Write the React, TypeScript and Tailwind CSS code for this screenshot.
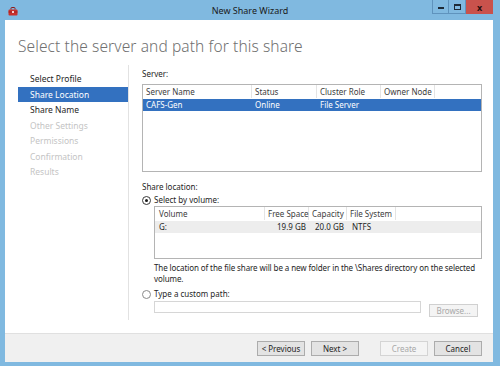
import React from 'react'

const navItems = [
  { label: 'Select Profile', state: 'done' },
  { label: 'Share Location', state: 'active' },
  { label: 'Share Name', state: 'done' },
  { label: 'Other Settings', state: 'off' },
  { label: 'Permissions', state: 'off' },
  { label: 'Confirmation', state: 'off' },
  { label: 'Results', state: 'off' },
]

function WizardIcon() {
  return (
    <svg width="10" height="9" viewBox="0 0 10 9">
      <path d="M3 2.5 V1.2 Q3 0.5 3.7 0.5 H6.3 Q7 0.5 7 1.2 V2.5" fill="none" stroke="#8c1a1a" strokeWidth="1" />
      <rect x="0.5" y="2.5" width="9" height="6" rx="1" fill="#c9302c" />
      <rect x="0.5" y="4.5" width="9" height="1" fill="#9e1f1f" />
      <rect x="4" y="4" width="2" height="2" fill="#f2d0d0" />
    </svg>
  )
}

function Radio({ checked }: { checked?: boolean }) {
  return (
    <span
      className={
        'w-[9px] h-[9px] rounded-full border flex items-center justify-center bg-white ' +
        (checked ? 'border-[#3a3a3a]' : 'border-[#8a8a8a]')
      }
    >
      {checked && <span className="w-[3px] h-[3px] rounded-full bg-[#1a1a1a]" />}
    </span>
  )
}

function Btn({ label, disabled }: { label: string; disabled?: boolean }) {
  return (
    <div
      className={
        'w-[48px] h-[15px] border flex items-center justify-center leading-none ' +
        (disabled
          ? 'border-[#d4d4d4] bg-[#f4f4f4] text-[#a8a8a8]'
          : 'border-[#acacac] bg-[#e3e3e3] text-[#1e1e1e]')
      }
    >
      {label}
    </div>
  )
}

export default function App() {
  return (
    <div className="w-[500px] h-[366px] bg-[#80b9e0] flex flex-col font-['Noto_Sans',sans-serif] text-[8px] text-[#1e1e1e] overflow-hidden">
      {/* title bar */}
      <div className="h-[20px] grid grid-cols-[1fr_auto_1fr] shrink-0">
        <div className="pl-[8px] pt-[7px]">
          <WizardIcon />
        </div>
        <div className="pt-[4px] text-[9px] leading-[14px] text-[#1a1a1a]">New Share Wizard</div>
        <div className="flex justify-end pr-[7px]">
          <div className="w-[17px] h-[14px] border border-[#5f93bd] border-t-0 flex items-end justify-center pb-[4px]">
            <span className="w-[6px] h-[2px] bg-[#1e2a36]" />
          </div>
          <div className="w-[17px] h-[14px] border border-[#5f93bd] border-t-0 border-l-0 flex items-center justify-center">
            <span className="w-[7px] h-[6px] border border-[#1e2a36] border-t-2" />
          </div>
          <div className="w-[27px] h-[14px] bg-[#c9524c] flex items-center justify-center text-[9px] font-bold leading-none text-[#2a0f0f]">
            x
          </div>
        </div>
      </div>

      {/* client */}
      <div className="flex-1 ml-[5px] mr-[7px] mb-[4px] bg-white flex flex-col">
        <div className="h-[45px] shrink-0 pl-[13px] pt-[14px] text-[15.5px] leading-[24px] text-[#707070] font-light tracking-[0.1px]">
          Select the server and path for this share
        </div>

        <div className="flex-1 flex">
          {/* nav */}
          <div className="w-[124px] h-[255px] border-r border-[#e2e2e2] pt-[6px] shrink-0">
            {navItems.map((it) => (
              <div
                key={it.label}
                className={
                  'ml-[13px] w-[110px] h-[15.5px] leading-[15.5px] pl-[12px] text-[8.5px] ' +
                  (it.state === 'active'
                    ? 'bg-[#3371c0] text-white'
                    : it.state === 'done'
                      ? 'text-[#1e1e1e]'
                      : 'text-[#c4c4c4]')
                }
              >
                {it.label}
              </div>
            ))}
          </div>

          {/* content */}
          <div className="flex-1 pl-[13px] pr-[11px] pt-[3px] flex flex-col">
            <div className="leading-[12px]">Server:</div>
            <div className="mt-[4px] h-[88px] border border-[#b4b4b4]">
              <div className="flex h-[13px] leading-[13px] text-[#3c3c3c]">
                <div className="w-[109px] pl-[3px] border-r border-[#e4e4e4]">Server Name</div>
                <div className="w-[65px] pl-[3px] border-r border-[#e4e4e4]">Status</div>
                <div className="w-[64px] pl-[3px] border-r border-[#e4e4e4]">Cluster Role</div>
                <div className="w-[54px] pl-[3px] border-r border-[#e4e4e4]">Owner Node</div>
              </div>
              <div className="mt-[1px] flex h-[12px] leading-[12px] bg-[#3371c0] text-white">
                <div className="w-[109px] pl-[3px]">CAFS-Gen</div>
                <div className="w-[65px] pl-[3px]">Online</div>
                <div className="w-[64px] pl-[3px]">File Server</div>
              </div>
            </div>

            <div className="mt-[9px] leading-[12px]">Share location:</div>
            <div className="mt-[1px] h-[12px] flex items-center gap-[3px]">
              <Radio checked />
              <span>Select by volume:</span>
            </div>
            <div className="ml-[12px] h-[53px] border border-[#b4b4b4]">
              <div className="flex h-[13px] leading-[13px] text-[#3c3c3c]">
                <div className="w-[110px] pl-[4px] border-r border-[#e4e4e4]">Volume</div>
                <div className="w-[44px] pl-[3px] border-r border-[#e4e4e4] whitespace-nowrap">Free Space</div>
                <div className="w-[38px] pl-[3px] border-r border-[#e4e4e4]">Capacity</div>
                <div className="w-[49px] pl-[3px] border-r border-[#e4e4e4] whitespace-nowrap">File System</div>
              </div>
              <div className="mt-[1px] flex h-[12px] leading-[12px] bg-[#ededed]">
                <div className="w-[110px] pl-[4px]">G:</div>
                <div className="w-[44px] pr-[3px] text-right">19.9 GB</div>
                <div className="w-[38px] pr-[3px] text-right">20.0 GB</div>
                <div className="w-[49px] pl-[5px]">NTFS</div>
              </div>
            </div>

            <div className="mt-[3px] ml-[12px] leading-[11px] whitespace-nowrap tracking-[-0.1px]">
              The location of the file share will be a new folder in the \Shares directory on the selected
              <br />
              volume.
            </div>

            <div className="mt-[4px] h-[12px] flex items-center gap-[3px]">
              <Radio />
              <span>Type a custom path:</span>
            </div>
            <div className="mt-[1px] ml-[12px] flex items-start">
              <div className="w-[267px] h-[12px] border border-[#d6d6d6]" />
              <div className="ml-[8px] mt-[3px] w-[49px] h-[13px] border border-[#d0d0d0] bg-[#f4f4f4] text-[#a8a8a8] flex items-center justify-center leading-none">
                Browse...
              </div>
            </div>
          </div>
        </div>

        {/* footer */}
        <div className="h-[29px] shrink-0 border-t border-[#e0e0e0] bg-[#f0f0f0] flex items-start justify-end pt-[7px] pr-[11px]">
          <Btn label="< Previous" />
          <div className="ml-[6px]">
            <Btn label="Next >" />
          </div>
          <div className="ml-[21px]">
            <Btn label="Create" disabled />
          </div>
          <div className="ml-[6px]">
            <Btn label="Cancel" />
          </div>
        </div>
      </div>
    </div>
  )
}
